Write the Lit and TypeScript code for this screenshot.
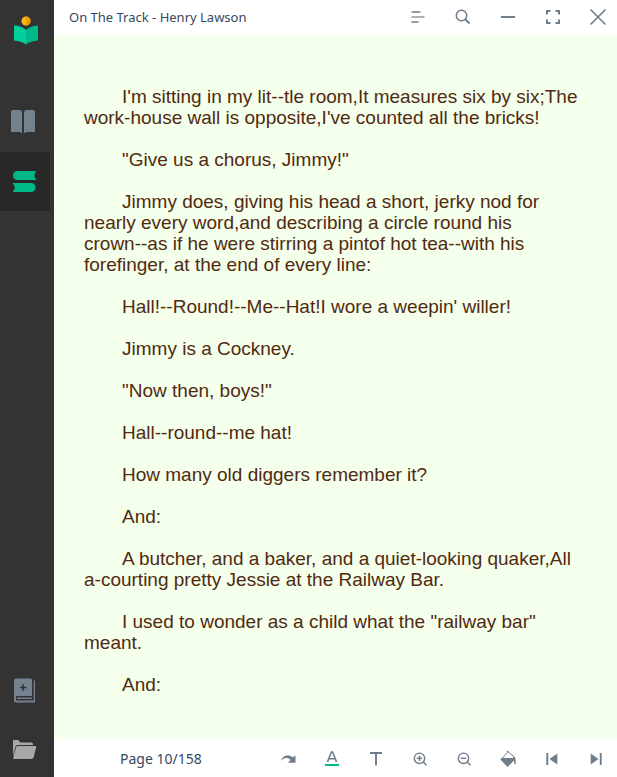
import { LitElement, html, svg, css } from "lit";
import { customElement, state } from "lit/decorators.js";

const PARAGRAPHS = [
  "I'm sitting in my lit--tle room,It measures six by six;The work-house wall is opposite,I've counted all the bricks!",
  '"Give us a chorus, Jimmy!"',
  html`Jimmy does, giving his head a short, jerky nod for nearly every word,and describing a circle round his <span class="unbroken">crown--as</span> if he were stirring a pintof hot tea--with his forefinger, at the end of every line:`,
  "Hall!--Round!--Me--Hat!I wore a weepin' willer!",
  "Jimmy is a Cockney.",
  '"Now then, boys!"',
  "Hall--round--me hat!",
  "How many old diggers remember it?",
  "And:",
  "A butcher, and a baker, and a quiet-looking quaker,All a-courting pretty Jessie at the Railway Bar.",
  'I used to wonder as a child what the "railway bar" meant.',
  "And:",
];

// Toolbar glyphs, drawn on a 24 x 24 grid.
const GLYPHS = {
  contents: svg`<path class="line" stroke-width="1.3" d="M5.5 7h9M5.5 17h7"/><path class="line" stroke-width="1.5" opacity=".8" d="M5.5 12h13"/>`,
  search: svg`<circle class="line" stroke-width="1.5" cx="10.5" cy="10.5" r="5.2"/><path class="line" stroke-width="2" d="M14.5 14.5l4 4"/>`,
  minimize: svg`<path class="line" stroke-width="2" d="M5 12h14"/>`,
  fullscreen: svg`<path class="line" stroke-width="2" d="M6 9.5V6h3.5M14.5 6H18v3.5M18 14.5V18h-3.5M9.5 18H6v-3.5"/>`,
  close: svg`<path class="line" stroke-width="1.6" d="M4.5 4.5l15 15M19.5 4.5l-15 15"/>`,
  redo: svg`<path class="fill" d="M4.5 14C6.5 8.2 12.5 6.8 16.8 10.3L19.5 8.5V15.8H12L14.5 13C11.7 10 7.5 10.7 4.5 14z"/>`,
  color: svg`<path class="line" stroke-width="1.6" d="M7.5 15L11.4 5h1.2L16.5 15M9 11.8h6"/><path class="accent" d="M5 17h14v2H5z"/>`,
  font: svg`<path class="line" stroke-width="1.9" d="M6 6h12M12 6v12.5"/>`,
  zoomIn: svg`<circle class="line" stroke-width="1.4" cx="11.5" cy="11.3" r="5.2"/><path class="line" stroke-width="1.5" d="M15.3 15l3.2 3.2"/><path class="line" stroke-width="1.4" d="M8.8 11.3h5.4M11.5 8.6V14"/>`,
  zoomOut: svg`<circle class="line" stroke-width="1.4" cx="11.5" cy="11.3" r="5.2"/><path class="line" stroke-width="1.5" d="M15.3 15l3.2 3.2"/><path class="line" stroke-width="1.4" d="M8.8 11.3h5.4"/>`,
  fill: svg`<path class="line" stroke-width="1" d="M6 11.5L12.3 4.8l5.7 5M12.3 4.8l-1.6-.6"/><path class="fill" d="M4.3 12.5L6 11h11v-1.2l1.3-.3c1.2 1 1.5 3 1.5 7.5h-1.3l-.5-3.5-6.4 6.5z"/>`,
  previous: svg`<path class="fill" d="M6.3 6h1.9v12H6.3zM17.3 6.5v11L9.5 12z"/>`,
  next: svg`<path class="fill" d="M15.8 6h1.9v12h-1.9zM6.7 6.5v11l7.8-5.5z"/>`,
};

type Glyph = keyof typeof GLYPHS;

const WINDOW_TOOLS: [Glyph, string][] = [
  ["contents", "Contents"],
  ["search", "Search"],
  ["minimize", "Minimize"],
  ["fullscreen", "Full screen"],
  ["close", "Close"],
];

const PAGE_TOOLS: [Glyph, string][] = [
  ["redo", "Go to page"],
  ["color", "Text color"],
  ["font", "Font"],
  ["zoomIn", "Increase text size"],
  ["zoomOut", "Decrease text size"],
  ["fill", "Background color"],
  ["previous", "Previous page"],
  ["next", "Next page"],
];

// Sidebar pictures, drawn on a 28 x 29 grid.
const NAV_ICONS = {
  reader: svg`<path fill="#74818f" d="M0 4c0-1.3.7-2 2-2h6c1.800 0 3 .8 3 2.500V25.500c-1-1.300-2.300-1.600-4-1.600H0zM13 4.500C13 2.800 14.200 2 16 2h6c1.300 0 2 .7 2 2v19.900h-7c-1.700 0-3 .3-4 1.600z"/>`,
  shelf: svg`<path fill="#00b98a" d="M6 4h19v1c-2 1.5-2 5.5 0 7v1H6c-5.3 0-5.3-9 0-9zM2 16h18.500c5.500 0 5.500 9 0 9H2v-1c2.300-1.600 2.300-5.400 0-7z"/>`,
  add: svg`<path fill="#74818f" d="M5.5 2.500H19.500c.9 0 1.500.6 1.500 1.500V20H5.800c-.6 0-.8.3-.8.8v3.700h17.700V4.500h1.300v21c0 .7-.4 1-1 1H5c-1.400 0-2-.7-2-2V5c0-1.700.8-2.500 2.500-2.500z"/><path fill="#74818f" d="M6 21.500h15v1.500H6z"/><path fill="none" stroke="#333" stroke-width="1.5" d="M9 11.500h6.500M12.200 8.200v6.600"/>`,
  folder: svg`<path fill="#a8a8a8" d="M2 5h5l2.500 2.500H20c1.300 0 2 .7 2 1.700V10H7c-1.500 0-2.300.8-2.600 2L2 21z"/><path fill="#a8a8a8" d="M7 11h17c1 0 1.400.5 1.100 1.500L22.700 22c-.3 1.200-1 2-2.200 2H3.500C2.300 24 2 23.200 2.300 22.200L5 12.500C5.300 11.500 6 11 7 11z"/>`,
};

@customElement("app-root")
export class AppRoot extends LitElement {
  static styles = css`
    :host {
      display: flex;
      min-height: 100vh;
      background: #fff;
      color: #34495e;
      font: 13px/20px "Noto Sans", "Open Sans", sans-serif;
    }
    button {
      display: flex;
      align-items: center;
      justify-content: center;
      margin: 0;
      padding: 0;
      border: 0;
      background: none;
      color: #6f7d8b;
      cursor: pointer;
    }
    svg {
      display: block;
      flex: none;
    }
    .line {
      fill: none;
      stroke: currentColor;
    }
    .fill {
      fill: currentColor;
    }
    .accent {
      fill: #00b98a;
    }
    .sidebar {
      display: flex;
      flex: none;
      flex-direction: column;
      box-sizing: border-box;
      width: 54px;
      padding-top: 15px;
      background: #333;
    }
    .logo {
      margin: 0 0 46px 12px;
    }
    .nav {
      width: 50px;
      height: 59px;
    }
    .nav.selected {
      background: #282828;
    }
    .library {
      display: grid;
      gap: 4px;
      margin-top: auto;
    }
    .library .nav {
      height: 55px;
    }
    .window {
      display: flex;
      flex: 1;
      flex-direction: column;
      min-width: 0;
    }
    .bar {
      display: flex;
      align-items: center;
      justify-content: space-between;
    }
    .titlebar {
      height: 34px;
      padding: 0 7px 1px 15px;
    }
    .statusbar {
      height: 36px;
      padding: 2px 9px 0 66px;
      font-size: 14px;
    }
    h1 {
      margin: 0;
      font: inherit;
    }
    .tools {
      display: flex;
      gap: 20px;
    }
    .titlebar .tools {
      gap: 21px;
    }
    .page {
      flex: 1;
      padding: 51px 30px 0;
      background: #f4ffec;
      color: #512a10;
      font: 19px/21px "Liberation Sans", Arial, sans-serif;
    }
    .page p {
      margin: 0 0 21px;
      text-indent: 2em;
    }
    .unbroken {
      white-space: nowrap;
    }
  `;

  @state() private view: "reader" | "shelf" = "shelf";

  private tool([glyph, label]: [Glyph, string]) {
    return html`<button aria-label=${label}>
      <svg width="24" height="24" viewBox="0 0 24 24" aria-hidden="true">${GLYPHS[glyph]}</svg>
    </button>`;
  }

  private nav(icon: keyof typeof NAV_ICONS, label: string, select?: () => void) {
    return html`<button
      class="nav ${this.view === icon ? "selected" : ""}"
      aria-label=${label}
      @click=${() => select?.()}
    >
      <svg width="28" height="29" viewBox="0 0 28 29" aria-hidden="true">${NAV_ICONS[icon]}</svg>
    </button>`;
  }

  render() {
    return html`
      <nav class="sidebar">
        <svg class="logo" width="28" height="32" viewBox="0 0 28 32" aria-hidden="true">
          <circle cx="14" cy="6" r="4.5" fill="#fdb813" />
          <path fill="#f09c00" d="M14 1.5a4.5 4.5 0 0 1 0 9z" />
          <path fill="#00cf9b" d="M2 10.500c4.500 0 9 1.500 12 4.500v14.500c-3-2.500-7.500-3.700-12-4z" />
          <path fill="#00b98a" d="M26 10.500c-4.500 0-9 1.500-12 4.500v14.500c3-2.500 7.500-3.700 12-4z" />
        </svg>
        ${this.nav("reader", "Reader", () => (this.view = "reader"))}
        ${this.nav("shelf", "Bookshelf", () => (this.view = "shelf"))}
        <div class="library">
          ${this.nav("add", "Add book")} ${this.nav("folder", "Open folder")}
        </div>
      </nav>
      <div class="window">
        <header class="bar titlebar">
          <h1>On The Track - Henry Lawson</h1>
          <div class="tools">${WINDOW_TOOLS.map((t) => this.tool(t))}</div>
        </header>
        <main class="page">${PARAGRAPHS.map((text) => html`<p>${text}</p>`)}</main>
        <footer class="bar statusbar">
          <span>Page 10/158</span>
          <div class="tools">${PAGE_TOOLS.map((t) => this.tool(t))}</div>
        </footer>
      </div>
    `;
  }
}
